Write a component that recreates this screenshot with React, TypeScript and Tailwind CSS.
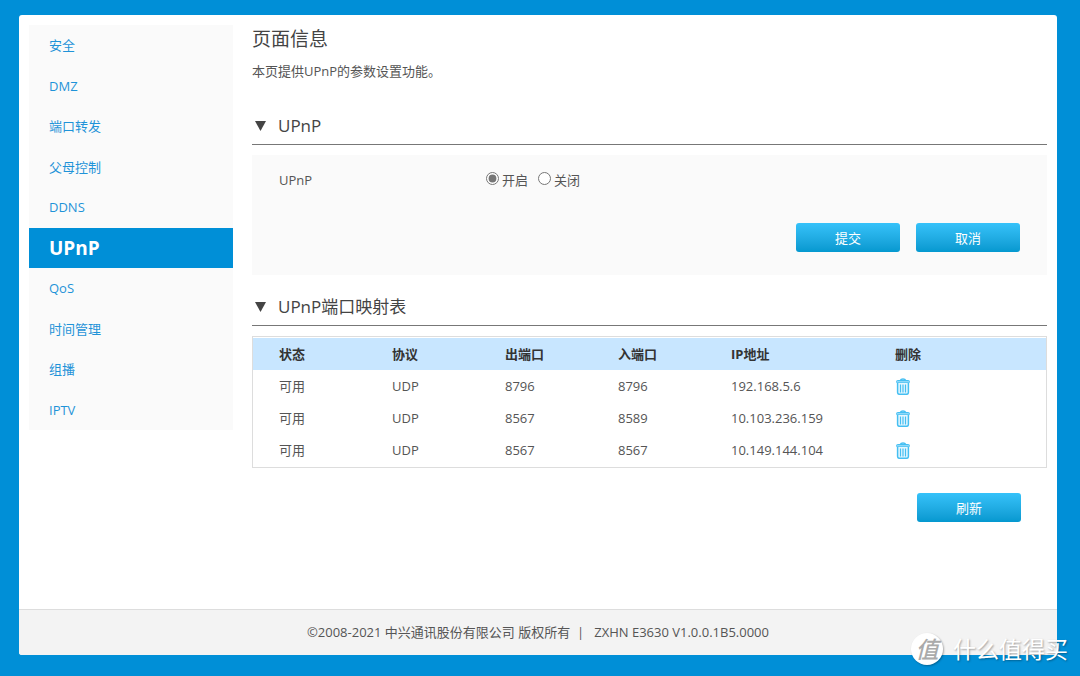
import { useState } from "react";
import type { ReactNode } from "react";

const menuItems = ["安全", "DMZ", "端口转发", "父母控制", "DDNS", "UPnP", "QoS", "时间管理", "组播", "IPTV"];

const mappings = [
  { status: "可用", protocol: "UDP", external: "8796", internal: "8796", ip: "192.168.5.6" },
  { status: "可用", protocol: "UDP", external: "8567", internal: "8589", ip: "10.103.236.159" },
  { status: "可用", protocol: "UDP", external: "8567", internal: "8567", ip: "10.149.144.104" },
];

const TrashIcon = () => (
  <svg width="14" height="17" viewBox="0 0 14 17" fill="none" stroke="#45bff2">
    <path d="M4.500 2.300C4.800 1.200 5.700.9 7 .9s2.200.3 2.500 1.400" strokeWidth="1.500" />
    <rect x=".6" y="2.500" width="12.800" height="2.400" rx=".9" fill="#8fd8f8" />
    <path
      d="M1.600 5v9.500c0 1.200.7 1.800 1.900 1.800h7c1.200 0 1.900-.6 1.900-1.800V5"
      fill="#e6f7fe"
      strokeWidth="1.500"
    />
    <path d="M4.500 6.500v8M7 6.500v8M9.500 6.500v8" strokeWidth="1.200" />
  </svg>
);

const ActionButton = ({ children }: { children: ReactNode }) => (
  <button
    type="button"
    className="w-[104px] h-[29px] rounded-[3px] bg-linear-to-b from-[#35c2fa] to-[#0498cf] text-white flex items-center justify-center"
  >
    {children}
  </button>
);

const SectionTitle = ({ children }: { children: ReactNode }) => (
  <h2 className="flex items-center border-b border-[#777] pb-[6px] pl-[3px] text-[17px] leading-6 text-[#444]">
    <svg width="11" height="10" viewBox="0 0 11 10" fill="#444" className="mr-3">
      <path d="M0 0h11L5.500 10z" />
    </svg>
    {children}
  </h2>
);

const Sidebar = () => (
  <nav className="w-[204px] shrink-0 self-start bg-[#fafafa]">
    <ul className="grid auto-rows-fr min-h-[405px]">
      {menuItems.map((item) => (
        <li key={item} className="flex">
          <a
            href="#"
            className={
              item === "UPnP"
                ? "flex flex-1 items-center pl-5 bg-[#008fd7] text-white text-[19px] font-bold"
                : "flex flex-1 items-center pl-5 text-[#1f93d8]"
            }
          >
            {item}
          </a>
        </li>
      ))}
    </ul>
  </nav>
);

const Watermark = () => (
  <div className="absolute right-3 bottom-[11px] flex items-center gap-[10px] text-white">
    <span className="size-8 rounded-full bg-white shadow-[1px_1px_2px_rgba(0,0,0,0.3)] flex items-center justify-center text-[23px] leading-8 font-medium italic text-[#aaa]">
      值
    </span>
    <span className="text-[23px] leading-8 [text-shadow:1px_1px_2px_rgba(0,0,0,0.35)]">什么值得买</span>
  </div>
);

export default function App() {
  const [enabled, setEnabled] = useState(true);

  return (
    <div className="relative min-h-screen flex flex-col bg-[#008fd7] pt-[15px] pr-[23px] pb-[21px] pl-[19px] font-['Open_Sans','Noto_Sans_CJK_SC',sans-serif] text-[13px] leading-5 text-[#555]">
      <div className="flex-1 flex flex-col rounded-[3px] bg-white overflow-hidden">
        <div className="flex-1 flex gap-[19px] p-[10px]">
          <Sidebar />

          <main className="flex-1 min-w-0">
            <h1 className="text-[19px] leading-7 text-[#444]">页面信息</h1>
            <p className="mt-2 mb-[33px]">本页提供UPnP的参数设置功能。</p>

            <SectionTitle>UPnP</SectionTitle>
            <form className="mt-[10px] mb-5 bg-[#fafafa] px-[27px] pt-[15px] pb-[23px]">
              <fieldset className="flex items-center">
                <legend className="float-left w-[207px]">UPnP</legend>
                <label className="flex items-center gap-[3px] mr-[10px]">
                  <input
                    type="radio"
                    name="upnp"
                    checked={enabled}
                    onChange={() => setEnabled(true)}
                    className="size-[13px] mb-1 accent-[#767676]"
                  />
                  开启
                </label>
                <label className="flex items-center gap-[3px]">
                  <input
                    type="radio"
                    name="upnp"
                    checked={!enabled}
                    onChange={() => setEnabled(false)}
                    className="size-[13px] mb-1 accent-[#767676]"
                  />
                  关闭
                </label>
              </fieldset>
              <div className="mt-[33px] flex justify-end gap-4">
                <ActionButton>提交</ActionButton>
                <ActionButton>取消</ActionButton>
              </div>
            </form>

            <SectionTitle>UPnP端口映射表</SectionTitle>
            <div className="mt-[10px] border border-[#ddd] py-px">
              <table className="w-full table-fixed text-left">
                <thead>
                  <tr className="h-8 bg-[#c8e6ff] text-[#333]">
                    <th className="w-[113px] pl-[26px]">状态</th>
                    <th className="w-[113px] pl-[26px]">协议</th>
                    <th className="w-[113px] pl-[26px]">出端口</th>
                    <th className="w-[113px] pl-[26px]">入端口</th>
                    <th className="w-[164px] pl-[26px]">IP地址</th>
                    <th className="pl-[26px]">删除</th>
                  </tr>
                </thead>
                <tbody>
                  {mappings.map((row) => (
                    <tr key={row.ip} className="h-8">
                      <td className="pl-[26px]">{row.status}</td>
                      <td className="pl-[26px]">{row.protocol}</td>
                      <td className="pl-[26px]">{row.external}</td>
                      <td className="pl-[26px]">{row.internal}</td>
                      <td className="pl-[26px]">{row.ip}</td>
                      <td className="pl-[26px]">
                        <button type="button" aria-label="删除" className="block ml-px">
                          <TrashIcon />
                        </button>
                      </td>
                    </tr>
                  ))}
                </tbody>
              </table>
            </div>
            <div className="mt-[25px] flex justify-end pr-[26px]">
              <ActionButton>刷新</ActionButton>
            </div>
          </main>
        </div>

        <footer className="border-t border-[#ddd] bg-[#f3f3f3] pt-3 pb-[13px] text-center">
          ©2008-2021 中兴通讯股份有限公司 版权所有 &nbsp;|&nbsp;&nbsp; ZXHN E3630 V1.0.0.1B5.0000
        </footer>
      </div>

      <Watermark />
    </div>
  );
}
